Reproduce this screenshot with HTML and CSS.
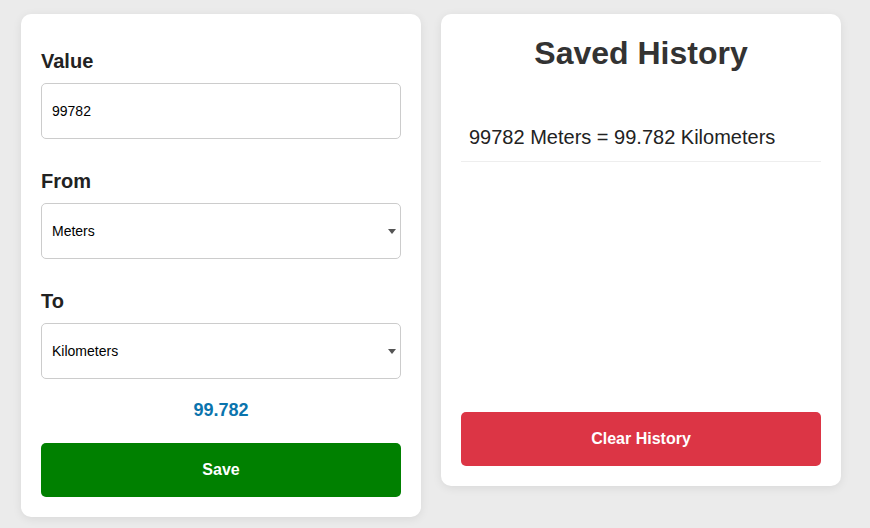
FILE: index.html
```html
<!DOCTYPE html>
<html lang="en">
<head>
<meta charset="utf-8">
<title>Unit Converter</title>
<link rel="stylesheet" href="styles.css">
</head>
<body>
<div class="layout">
  <section class="card converter">
    <label class="field-label" for="value">Value</label>
    <input class="field" id="value" type="text" value="99782">
    <label class="field-label" for="from">From</label>
    <div class="select-wrap">
      <select class="field" id="from">
        <option selected>Meters</option>
        <option>Kilometers</option>
      </select>
    </div>
    <label class="field-label" for="to">To</label>
    <div class="select-wrap">
      <select class="field" id="to">
        <option>Meters</option>
        <option selected>Kilometers</option>
      </select>
    </div>
    <div class="result">99.782</div>
    <button class="btn btn-save" type="button">Save</button>
  </section>
  <section class="card history">
    <h1 class="history-title">Saved History</h1>
    <ul class="history-list">
      <li class="history-item">99782 Meters = 99.782 Kilometers</li>
    </ul>
    <button class="btn btn-clear" type="button">Clear History</button>
  </section>
</div>
</body>
</html>
```

FILE: styles.css
```css
* { box-sizing: border-box; }

body {
  margin: 0;
  background: #ebebeb;
  font-family: "Liberation Sans", Arial, sans-serif;
  color: #333;
}

.layout {
  display: flex;
  align-items: flex-start;
  gap: 20px;
  padding: 14px 21px;
}

.card {
  width: 400px;
  background: #fff;
  border-radius: 10px;
  padding: 20px;
  box-shadow: 0 2px 10px rgba(0, 0, 0, 0.08);
}

.converter {
  display: flex;
  flex-direction: column;
}

.field-label {
  display: block;
  font-size: 20px;
  font-weight: bold;
  color: #222;
  margin: 16px 0 10px;
  line-height: 23px;
}

.field {
  display: block;
  width: 100%;
  height: 56px;
  margin: 0 0 15px;
  padding: 0 10px;
  border: 1px solid #ccc;
  border-radius: 5px;
  background: #fff;
  font-family: "Liberation Sans", Arial, sans-serif;
  font-size: 14px;
  color: #000;
  -webkit-appearance: none;
  appearance: none;
}

.select-wrap {
  position: relative;
}

.select-wrap::after {
  content: "";
  position: absolute;
  right: 5px;
  top: 26px;
  width: 0;
  height: 0;
  border-left: 4px solid transparent;
  border-right: 4px solid transparent;
  border-top: 5px solid #555;
  pointer-events: none;
}

.result {
  margin-top: 6px;
  text-align: center;
  font-size: 18px;
  line-height: 21px;
  font-weight: bold;
  color: #0a74ad;
}

.btn {
  display: block;
  width: 100%;
  height: 54px;
  border: none;
  border-radius: 5px;
  color: #fff;
  font-family: "Liberation Sans", Arial, sans-serif;
  font-size: 16px;
  font-weight: bold;
}

.btn-save {
  margin-top: 22px;
  background: #008000;
}

.btn-clear {
  margin-top: 20px;
  background: #dc3545;
}

.history-title {
  margin: 1px 0 42px;
  text-align: center;
  font-size: 32px;
  line-height: 37px;
  font-weight: bold;
  color: #333;
}

.history-list {
  list-style: none;
  margin: 0;
  padding: 0;
  height: 278px;
}

.history-item {
  padding: 12px 8px;
  font-size: 20px;
  line-height: 23px;
  color: #222;
  border-bottom: 1px solid #eee;
}
```
